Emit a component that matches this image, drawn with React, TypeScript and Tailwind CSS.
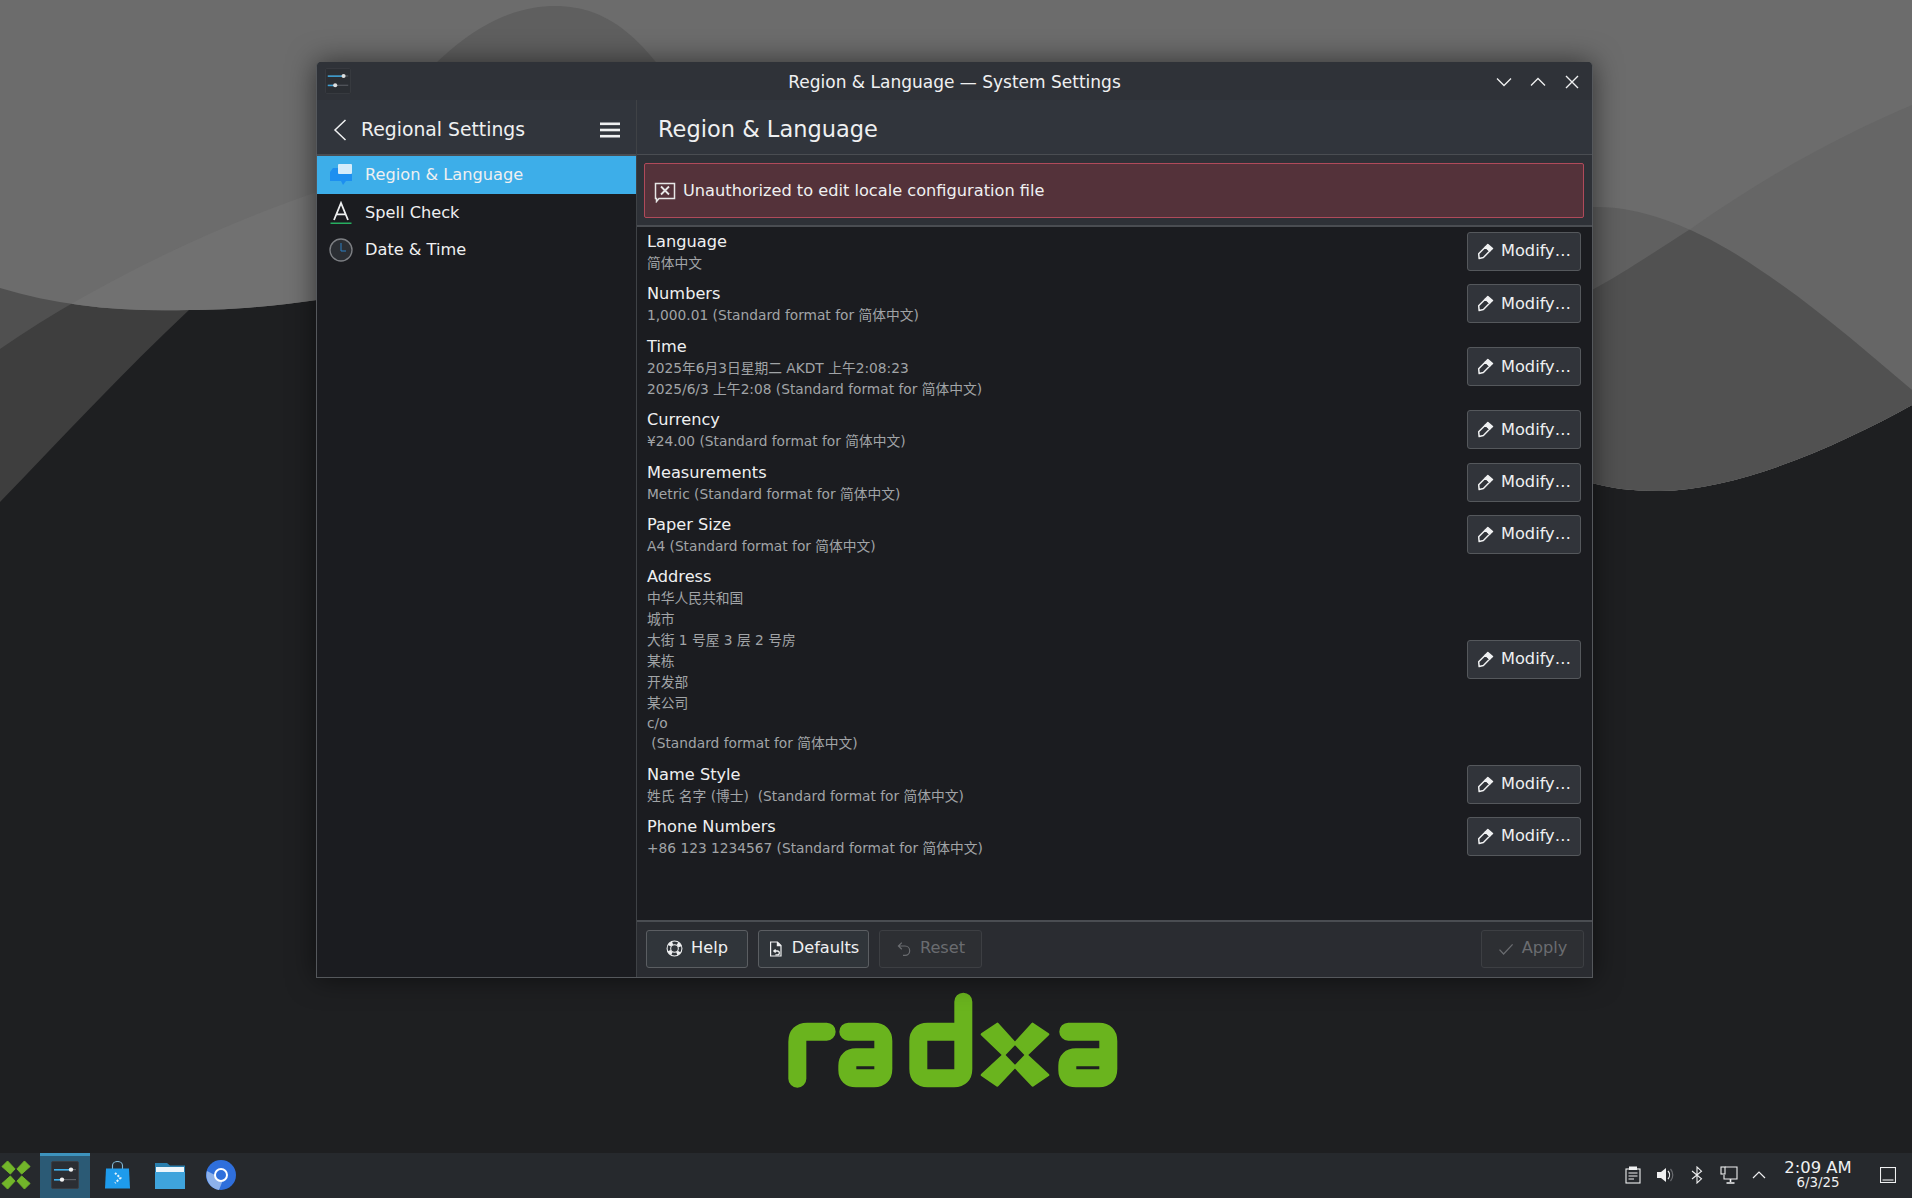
const SUFFIX = "(Standard format for 简体中文)";

const rows = [
  { title: "Language", lines: ["简体中文"] },
  { title: "Numbers", lines: [`1,000.01 ${SUFFIX}`] },
  { title: "Time", lines: ["2025年6月3日星期二 AKDT 上午2:08:23", `2025/6/3 上午2:08 ${SUFFIX}`] },
  { title: "Currency", lines: [`¥24.00 ${SUFFIX}`] },
  { title: "Measurements", lines: [`Metric ${SUFFIX}`] },
  { title: "Paper Size", lines: [`A4 ${SUFFIX}`] },
  {
    title: "Address",
    lines: ["中华人民共和国", "城市", "大街 1 号屋 3 层 2 号房", "某栋", "开发部", "某公司", "c/o", ` ${SUFFIX}`],
  },
  { title: "Name Style", lines: [`姓氏 名字 (博士)  ${SUFFIX}`] },
  { title: "Phone Numbers", lines: [`+86 123 1234567 ${SUFFIX}`] },
];

const TOP_EDGE =
  "M0,0 H1912 V405 C1840,445 1740,490 1660,491 C1630,491 1610,488 1592,483 L317,300 C280,305 240,310 189,310 C120,312 60,306 0,288 Z";
const PEAK =
  "M1592,207 C1640,205 1700,228 1760,270 C1820,310 1870,355 1912,390 V405 C1840,445 1740,490 1660,491 C1630,491 1610,488 1592,483 Z";
const DIAGONAL =
  "M1912,105 C1830,140 1760,180 1692,228 C1650,255 1620,275 1592,290 V483 C1610,488 1630,491 1660,491 C1740,490 1840,445 1912,405 Z";

function Wallpaper() {
  return (
    <svg className="absolute inset-0" width="1912" height="1198" viewBox="0 0 1912 1198">
      <defs>
        <clipPath id="top-clip">
          <path d={TOP_EDGE} />
        </clipPath>
        <clipPath id="peak-clip">
          <path d={PEAK} />
        </clipPath>
      </defs>
      <rect width="1912" height="1198" fill="#1e1f21" />
      <path d="M0,502 C60,440 125,370 189,310 C240,265 280,240 317,215 L400,200 V0 H0 Z" fill="#3e3e3e" />
      <path d="M0,349 C100,280 220,225 317,192 L400,150 V0 H0 Z" fill="#505050" />
      <path d={TOP_EDGE} fill="#6c6c6c" />
      <g clipPath="url(#top-clip)">
        <path d="M0,349 C100,280 220,225 317,192 L400,150 V420 H0 Z" fill="#717171" />
      </g>
      <path d="M380,130 C450,30 510,6 555,6 C610,6 650,40 700,130 Z" fill="#5f5f5f" />
      <path d={DIAGONAL} fill="#666666" />
      <path d={PEAK} fill="#606060" />
      <g clipPath="url(#peak-clip)">
        <path d={DIAGONAL} fill="#515151" />
      </g>
      <RadxaLogo />
    </svg>
  );
}

function RadxaLogo() {
  return (
    <g transform="translate(770 980) scale(0.3333)" fill="none" stroke="#6ab41e" strokeWidth="54" strokeLinecap="round" strokeLinejoin="round">
      <path d="M82,296 V185 Q82,155 112,155 H170" />
      <path d="M235,155 H312 Q340,155 340,183 V267 Q340,295 312,295 H258 Q232,295 232,270 V257 Q232,232 258,232 H320" />
      <path d="M580,65 V267 Q580,295 552,295 H473 Q445,295 445,267 V183 Q445,155 473,155 H575" />
      <g fill="#6ab41e" stroke="#6ab41e" strokeWidth="8">
        <path d="M636,163 L682,132 L735,190 L701,225 Z" />
        <path d="M788,132 L834,163 L769,225 L735,190 Z" />
        <path d="M701,225 L735,260 L682,316 L636,285 Z" />
        <path d="M769,225 L834,285 L788,316 L735,260 Z" />
      </g>
      <path d="M895,155 H987 Q1015,155 1015,183 V267 Q1015,295 987,295 H918 Q892,295 892,270 V257 Q892,232 918,232 H995" />
    </g>
  );
}

function SettingsIcon({ size }: { size: number }) {
  return (
    <svg width={size} height={size} viewBox="0 0 28 28">
      <rect x="0.5" y="0.5" width="27" height="27" rx="1.5" fill="#2b2e33" stroke="#3a3d42" />
      <rect x="3" y="8" width="22" height="1.2" fill="#5c6066" />
      <rect x="3" y="8" width="17" height="1.6" fill="#3daee9" />
      <circle cx="20" cy="8.6" r="2.2" fill="#f2f2f2" />
      <rect x="3" y="18" width="22" height="1.2" fill="#5c6066" />
      <rect x="3" y="18" width="8" height="1.6" fill="#3daee9" />
      <circle cx="11" cy="18.6" r="2.2" fill="#f2f2f2" />
    </svg>
  );
}

function PenIcon() {
  return (
    <svg width="17" height="17" viewBox="0 0 16 16" fill="none" stroke="#eff0f1" strokeWidth="1.4" strokeLinejoin="round">
      <path d="M10.2 1.4 L14.6 5.2 L12 7.6 L7.9 3.7 Z" fill="#eff0f1" />
      <path d="M7.9 3.7 L12 7.6 L6 13.6 L2 14.6 L1.6 10.2 Z" />
    </svg>
  );
}

function HelpIcon() {
  return (
    <svg width="17" height="17" viewBox="0 0 16 16" fill="none">
      <circle cx="8" cy="8" r="5.4" stroke="#eff0f1" strokeWidth="3.2" strokeDasharray="4 4.48" strokeDashoffset="2" transform="rotate(45 8 8)" />
      <circle cx="8" cy="8" r="7" stroke="#eff0f1" strokeWidth="1" />
      <circle cx="8" cy="8" r="3.6" stroke="#eff0f1" strokeWidth="1" />
    </svg>
  );
}

function DefaultsIcon() {
  return (
    <svg width="16" height="16" viewBox="0 0 16 16" fill="none" stroke="#eff0f1" strokeWidth="1.2">
      <path d="M2.6 1 H9.4 L13 4.6 V15 H2.6 Z" />
      <path d="M9.4 1 V4.6 H13" fill="#eff0f1" />
      <path d="M7.6 8.6 L5.9 10 L7.6 11.4 M6 10 H9.4 A1.9 1.9 0 0 1 9.4 13.8 H7.4" strokeWidth="1.3" />
    </svg>
  );
}

function ResetIcon() {
  return (
    <svg width="16" height="16" viewBox="0 0 16 16" fill="none" stroke="#6a6c70" strokeWidth="1.2">
      <path d="M5.8 1.6 L2.4 5 L5.8 8.2 M2.6 5 H9 A4.6 4.6 0 0 1 9 14.4 H7" />
    </svg>
  );
}

function CheckIcon() {
  return (
    <svg width="16" height="16" viewBox="0 0 16 16" fill="none" stroke="#6a6c70" strokeWidth="1.3">
      <path d="M1.5 8.6 L5.6 13 L14.6 3.4" />
    </svg>
  );
}

function ActionButton({ icon, label, disabled, width }: { icon: React.ReactNode; label: string; disabled?: boolean; width: string }) {
  return (
    <div
      className={`flex h-[38px] items-center justify-center gap-[8px] rounded-[3px] border text-[16.2px] ${width} ${
        disabled ? "border-[#3d3f43] bg-[#2d2f33] text-[#6a6c70]" : "border-[#5b5e62] bg-[#30353a] text-[#eff0f1]"
      }`}
    >
      {icon}
      <span>{label}</span>
    </div>
  );
}

function ModifyButton() {
  return (
    <div className="flex h-[39px] w-[114px] shrink-0 items-center gap-[7px] rounded-[3px] border border-[#55585c] bg-[#31343a] pl-[9px] text-[16.2px] text-[#eff0f1]">
      <PenIcon />
      <span>Modify…</span>
    </div>
  );
}

function SidebarItem({ icon, label, active }: { icon: React.ReactNode; label: string; active?: boolean }) {
  return (
    <div className={`flex h-[37.5px] items-center pt-[1px] text-[16.2px] text-[#eff0f1] ${active ? "bg-[#3daee9]" : ""}`}>
      <div className="flex w-[48px] justify-center">{icon}</div>
      <span>{label}</span>
    </div>
  );
}

function Sidebar() {
  return (
    <aside className="flex w-[320px] flex-col border-r border-[#3f4246] bg-[#1b1c20]">
      <div className="flex h-[54px] items-center justify-between bg-[#31353c] pl-[16px] pr-[15px] pt-[6px] text-[#eff0f1]">
        <div className="flex items-center gap-[14px]">
          <svg width="14" height="22" viewBox="0 0 14 22" fill="none" stroke="#eff0f1" strokeWidth="1.5">
            <path d="M12.5 1 L2 11 L12.5 21" />
          </svg>
          <span className="text-[18.8px]">Regional Settings</span>
        </div>
        <svg width="22" height="16" viewBox="0 0 22 16" fill="#eff0f1">
          <rect x="1" y="0.5" width="20" height="2.6" />
          <rect x="1" y="6.7" width="20" height="2.6" />
          <rect x="1" y="12.9" width="20" height="2.6" />
        </svg>
      </div>
      <div className="h-[2px] bg-[#4a4d52]" />
      <SidebarItem
        active
        label="Region & Language"
        icon={
          <svg width="24" height="24" viewBox="0 0 24 24">
            <path d="M4 5 H23 V18 H17 L14 22 L12 18 H1 V9 Z" fill="#1d8ff0" />
            <rect x="9" y="1" width="14" height="10" rx="1" fill="#d5ecfa" />
          </svg>
        }
      />
      <SidebarItem
        label="Spell Check"
        icon={
          <svg width="24" height="24" viewBox="0 0 24 24" fill="none">
            <path d="M5 19 L12 2 L19 19 M7.4 13.4 H16.6" stroke="#eff0f1" strokeWidth="1.8" />
            <rect x="1.5" y="21.5" width="21" height="1.5" fill="#27ae60" />
          </svg>
        }
      />
      <SidebarItem
        label="Date & Time"
        icon={
          <svg width="24" height="24" viewBox="0 0 24 24" fill="none">
            <circle cx="12" cy="12" r="11" fill="#2b2e33" stroke="#7d7f83" strokeWidth="1.4" />
            <path d="M12 5 V13 H17" stroke="#2d7fc4" strokeWidth="1" />
          </svg>
        }
      />
    </aside>
  );
}

function ContentList() {
  return (
    <div className="-mt-[1.6px] flex-1">
      {rows.map((row) => (
        <div key={row.title} className="flex items-center justify-between py-[4.7px] pl-[10px] pr-[11px]">
          <div className="translate-y-[1px]">
            <div className="text-[16.2px] leading-[22px] text-[#eff0f1]">{row.title}</div>
            {row.lines.map((line) => (
              <div key={line} className={`whitespace-pre text-[13.75px] text-[#a1a4a7] ${line === "c/o" ? "leading-[19px]" : "leading-[21px]"}`}>
                {line}
              </div>
            ))}
          </div>
          <ModifyButton />
        </div>
      ))}
    </div>
  );
}

function MainPanel() {
  return (
    <section className="flex min-w-0 flex-1 flex-col bg-[#1b1c20]">
      <div className="flex h-[54px] items-center bg-[#31353c] pl-[21px] pt-[6px] text-[22.5px] text-[#eff0f1]">Region &amp; Language</div>
      <div className="h-[1px] bg-[#4a4d52]" />
      <div className="bg-[#2e3137] pb-[7px] pl-[7px] pr-[8px] pt-[8px]">
        <div className="flex h-[55px] items-center gap-[7px] rounded-[2px] border border-[#b04a5a] bg-[#54323a] pl-[9px] pt-[2px] text-[16.2px] text-[#eff0f1]">
          <svg width="22" height="22" viewBox="0 0 22 22" fill="none" stroke="#e6e6e6" strokeWidth="1.5">
            <path d="M1.5 2.5 H20.5 V17.5 H5 L2.5 20.5 V17.5 H1.5 Z" />
            <path d="M7 5.5 L15 13.5 M15 5.5 L7 13.5" strokeWidth="1.8" />
          </svg>
          <span>Unauthorized to edit locale configuration file</span>
        </div>
      </div>
      <div className="h-[2px] bg-[#4a4d52]" />
      <ContentList />
      <div className="h-[2px] bg-[#4a4d52]" />
      <div className="flex h-[55px] items-center justify-between bg-[#2a2c31] pb-[2px] pl-[9px] pr-[8px]">
        <div className="flex gap-[10px]">
          <ActionButton width="w-[102px]" icon={<HelpIcon />} label="Help" />
          <ActionButton width="w-[111px]" icon={<DefaultsIcon />} label="Defaults" />
          <ActionButton width="w-[103px]" icon={<ResetIcon />} label="Reset" disabled />
        </div>
        <ActionButton width="w-[103px]" icon={<CheckIcon />} label="Apply" disabled />
      </div>
    </section>
  );
}

function SettingsWindow() {
  return (
    <div className="absolute left-[316px] top-[62px] flex h-[916px] w-[1277px] flex-col overflow-hidden rounded-t-[5px] border border-t-0 border-[#55585c] bg-[#2f3238] shadow-[0_0_28px_rgba(0,0,0,0.55)]">
      <div className="relative flex h-[38px] shrink-0 items-center justify-center bg-[#2f3238] pt-[4px] text-[17px] text-[#eff0f1]">
        <div className="absolute left-[8px] top-[6px] opacity-90">
          <SettingsIcon size={26} />
        </div>
        <span>Region &amp; Language — System Settings</span>
        <div className="absolute right-[12px] top-[12px] flex gap-[18px]">
          <svg width="16" height="16" viewBox="0 0 16 16" fill="none" stroke="#eff0f1" strokeWidth="1.3">
            <path d="M1 4.5 L8 11.5 L15 4.5" />
          </svg>
          <svg width="16" height="16" viewBox="0 0 16 16" fill="none" stroke="#eff0f1" strokeWidth="1.3">
            <path d="M1 11.5 L8 4.5 L15 11.5" />
          </svg>
          <svg width="16" height="16" viewBox="0 0 16 16" fill="none" stroke="#eff0f1" strokeWidth="1.4">
            <path d="M2 2 L14 14 M14 2 L2 14" />
          </svg>
        </div>
      </div>
      <div className="flex min-h-0 flex-1">
        <Sidebar />
        <MainPanel />
      </div>
    </div>
  );
}

function TaskSlot({ children, width, active }: { children: React.ReactNode; width: string; active?: boolean }) {
  return (
    <div className={`flex h-full items-center justify-center pb-[2px] ${width} ${active ? "border-t-[3px] border-[#3d93bd] bg-[#2b5a75] pb-[4px]" : ""}`}>
      {children}
    </div>
  );
}

function Taskbar() {
  return (
    <footer className="relative flex h-[45px] shrink-0 items-center justify-between bg-[#26292d] text-[#eff0f1]">
      <div className="flex h-full items-center">
        <div className="flex h-full w-[40px] items-center pb-[2px]">
          <svg width="32" height="30" viewBox="0 0 32 32" fill="#72b62a" stroke="#72b62a" strokeWidth="1" strokeLinejoin="round">
            <path d="M1 7 L7 1 L15 9.5 L10 15 Z" />
            <path d="M25 1 L31 7 L22 15 L17 9.5 Z" />
            <path d="M10 17 L15 22.5 L7 31 L1 25 Z" />
            <path d="M22 17 L31 25 L25 31 L17 22.5 Z" />
          </svg>
        </div>
        <TaskSlot width="w-[50px]" active>
          <SettingsIcon size={28} />
        </TaskSlot>
        <TaskSlot width="w-[54px]">
          <svg width="25" height="28" viewBox="0 0 25 28" fill="none">
            <path d="M7.5 8 V4.5 A5 4 0 0 1 17.5 4.5 V8" stroke="#7fb9d9" strokeWidth="1.1" />
            <path d="M1 7.5 H24 L25 27.5 H0 Z" fill="#1e9bec" />
            <path d="M10 12 L15.5 17 L10 22" stroke="#e4f3fb" strokeWidth="2" strokeDasharray="2 1.5" />
          </svg>
        </TaskSlot>
        <TaskSlot width="w-[51px]">
          <svg width="30" height="28" viewBox="0 0 30 28">
            <path d="M0 2 H12 L15 4.5 H30 V27 H0 Z" fill="#2a7fae" />
            <rect x="1" y="6" width="28" height="5" fill="#eef6fb" />
            <path d="M0 11 H30 V28 H0 Z" fill="#3fa4dc" />
          </svg>
        </TaskSlot>
        <TaskSlot width="w-[52px]">
          <svg width="30" height="30" viewBox="0 0 30 30" fill="none">
            <circle cx="15" cy="15" r="15" fill="#2f6fdc" />
            <path d="M1 11 A15 15 0 0 0 13 30 L17 20 A6 6 0 0 1 9 15 Z" fill="#8db1ea" />
            <circle cx="15" cy="15" r="6" fill="#2f6fdc" stroke="#fff" strokeWidth="2" />
          </svg>
        </TaskSlot>
      </div>
      <div className="flex h-full items-center pb-[2px] pr-[16px]">
        <div className="flex w-[32px] justify-center">
          <svg width="16" height="18" viewBox="0 0 16 18" fill="none" stroke="#eff0f1" strokeWidth="1.1">
            <rect x="1" y="3" width="14" height="14" />
            <rect x="4" y="0.5" width="8" height="3.5" fill="#eff0f1" stroke="none" />
            <path d="M3.5 7 H12.5 M3.5 10 H12.5 M3.5 13 H9" />
          </svg>
        </div>
        <div className="flex w-[32px] justify-center">
          <svg width="18" height="16" viewBox="0 0 18 16" fill="none">
            <path d="M1 5 H5 L10 1 V15 L5 11 H1 Z" fill="#eff0f1" />
            <path d="M12 4 A6 6 0 0 1 12 12" stroke="#eff0f1" strokeWidth="1.2" />
            <path d="M14.5 2 A9 9 0 0 1 14.5 14" stroke="#6a6c70" strokeWidth="1.2" />
          </svg>
        </div>
        <div className="flex w-[32px] justify-center">
          <svg width="12" height="18" viewBox="0 0 12 18" fill="none" stroke="#eff0f1" strokeWidth="1.1">
            <path d="M1 5 L10.5 12.8 L6 17 V1 L10.5 5.2 L1 13" />
          </svg>
        </div>
        <div className="flex w-[32px] justify-center">
          <svg width="18" height="18" viewBox="0 0 18 18" fill="none" stroke="#eff0f1" strokeWidth="1.1">
            <path d="M5 1 H17 V13 H4 V9" />
            <rect x="1" y="1" width="4" height="7" />
            <path d="M10.5 13 V16 M6.5 17 H14.5" strokeWidth="1.6" />
          </svg>
        </div>
        <div className="flex w-[28px] justify-center">
          <svg width="14" height="9" viewBox="0 0 14 9" fill="none" stroke="#eff0f1" strokeWidth="1.2">
            <path d="M1 8 L7 2 L13 8" />
          </svg>
        </div>
        <div className="flex w-[90px] flex-col items-center">
          <span className="text-[16.4px] leading-[17px]">2:09 AM</span>
          <span className="text-[13.4px] leading-[14px]">6/3/25</span>
        </div>
        <div className="ml-[17px] flex justify-center">
          <svg width="16" height="16" viewBox="0 0 16 16" fill="none" stroke="#eff0f1" strokeWidth="1.1">
            <rect x="0.5" y="0.5" width="15" height="15" />
            <path d="M2.5 13 H13.5" />
          </svg>
        </div>
      </div>
    </footer>
  );
}

export default function App() {
  return (
    <div className="relative flex h-[1198px] w-[1912px] flex-col overflow-hidden [font-family:'DejaVu_Sans','Noto_Sans_CJK_SC',sans-serif]">
      <Wallpaper />
      <main className="relative flex-1">
        <SettingsWindow />
      </main>
      <Taskbar />
    </div>
  );
}
